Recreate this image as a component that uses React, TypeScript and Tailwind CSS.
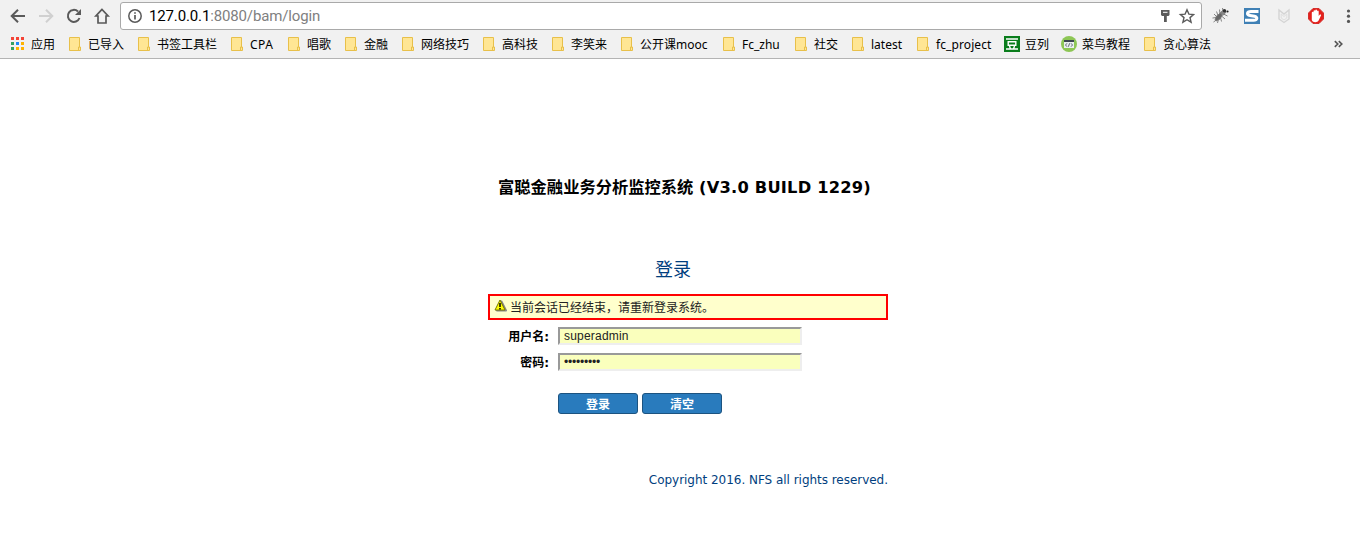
import { ReactNode } from 'react';

const UI = "font-['Noto_Sans','Noto_Sans_CJK_SC',sans-serif]";
const CJK = "font-['Noto_Sans_CJK_SC',sans-serif]";

function Folder() {
  return (
    <svg width="13" height="16" viewBox="0 0 13 16" className="shrink-0">
      <path d="M.5.5h10v9.500h1v3.500h-11z" fill="#ffe694" stroke="#e8c04a" />
      <path d="M9.500 13V10h1.500" fill="none" stroke="#e8c04a" />
    </svg>
  );
}

function AppsIcon() {
  const colors = ['#f44336', '#f44336', '#f44336', '#34a061', '#1e88f5', '#ffb300', '#34a061', '#ffb300', '#ffb300'];
  return (
    <svg width="13" height="16" viewBox="0 0 13 16" className="shrink-0" shapeRendering="crispEdges">
      {colors.map((c, i) => (
        <rect key={i} x={(i % 3) * 5} y={Math.floor(i / 3) * 5} width="3" height="3" fill={c} />
      ))}
    </svg>
  );
}

function DouIcon() {
  return (
    <svg width="16" height="16" viewBox="0 0 16 16" className="-mt-[2px] shrink-0">
      <path d="M0 0h16v16H0z" fill="#0a7d1c" />
      <path d="M2 3h12M2 13h12M4.200 5.800h7.600v3.400H4.200zM5.500 10l1 3M10.500 10l-1 3" fill="none" stroke="#fff" strokeWidth="1.400" />
    </svg>
  );
}

function RunoobIcon() {
  return (
    <svg width="16" height="16" viewBox="0 0 16 16" className="-mt-[2px] shrink-0">
      <circle cx="8" cy="8" r="8" fill="#8dc655" />
      <path d="M3 4h10v8H3z" fill="#e9eef0" />
      <path d="M3 4h10v2H3z" fill="#3c4650" />
      <path d="M6 7.300L4.500 9 6 10.700M10 7.300L11.500 9 10 10.700M8.600 7.300l-1.200 3.400" fill="none" stroke="#3c4650" strokeWidth=".8" />
    </svg>
  );
}

type Mark = { label: string; icon: ReactNode; box: string };

const marks: Mark[] = [
  { label: '应用', icon: <AppsIcon />, box: 'w-[58px] gap-[7px]' },
  { label: '已导入', icon: <Folder />, box: 'w-[69px] gap-[6px]' },
  { label: '书签工具栏', icon: <Folder />, box: 'w-[93px] gap-[6px]' },
  { label: 'CPA', icon: <Folder />, box: 'w-[57px] gap-[6px] tracking-[0.5px]' },
  { label: '唱歌', icon: <Folder />, box: 'w-[57px] gap-[6px]' },
  { label: '金融', icon: <Folder />, box: 'w-[57px] gap-[6px]' },
  { label: '网络技巧', icon: <Folder />, box: 'w-[81px] gap-[6px]' },
  { label: '高科技', icon: <Folder />, box: 'w-[69px] gap-[6px]' },
  { label: '李笑来', icon: <Folder />, box: 'w-[69px] gap-[6px]' },
  { label: '公开课mooc', icon: <Folder />, box: 'w-[102px] gap-[6px]' },
  { label: 'Fc_zhu', icon: <Folder />, box: 'w-[72px] gap-[6px]' },
  { label: '社交', icon: <Folder />, box: 'w-[57px] gap-[6px]' },
  { label: 'latest', icon: <Folder />, box: 'w-[65px] gap-[6px]' },
  { label: 'fc_project', icon: <Folder />, box: 'w-[87px] gap-[6px] tracking-[0.1px]' },
  { label: '豆列', icon: <DouIcon />, box: 'w-[57px] gap-[5px]' },
  { label: '菜鸟教程', icon: <RunoobIcon />, box: 'w-[83px] gap-[5px]' },
  { label: '贪心算法', icon: <Folder />, box: 'w-[80px] gap-[6px]' },
];

function Toolbar() {
  return (
    <div className="flex h-[32px] items-center">
      <svg width="120" height="32" viewBox="0 0 120 32" className="shrink-0" fill="none" stroke="#5a5a5a" strokeWidth="2">
        <path d="M25 16H12.500M18 9.700L11.700 16l6.300 6.300" />
        <path d="M39 16h12.500M46 9.700l6.300 6.300-6.300 6.300" stroke="#d0d0d0" />
        <path d="M79.500 18A6 6 0 1 1 78 11.500" />
        <path d="M81 9v6h-6z" fill="#5a5a5a" stroke="none" />
        <path d="M102 9.400L95.900 16H98v7h8v-7h2.100z" strokeWidth="1.700" />
      </svg>
      <div className="flex h-[28px] w-[1082px] shrink-0 items-center rounded-[3px] border border-[#a9a9a9] bg-white pr-[6px] pl-[6px]">
        <svg width="16" height="16" viewBox="0 0 16 16" fill="none" stroke="#5a5a5a" strokeWidth="1.500">
          <circle cx="8" cy="8" r="6.200" />
          <path d="M8 7v4.500M8 4.300v1.500" strokeWidth="1.700" />
        </svg>
        <div className="ml-[6px] flex-1 font-['Roboto',sans-serif] text-[15px] leading-[26px] tracking-[-0.140px] text-[#808080]">
          <span className="text-black">127.0.0.1</span>:8080/bam/login
        </div>
        <svg width="40" height="20" viewBox="0 0 40 20">
          <path d="M6 4h8.500v5l-1 1h-1.700v6H9v-6H7l-1-1z" fill="#5a5a5a" />
          <path d="M8 6.300h4.500" stroke="#fff" strokeWidth="1" />
          <path d="M32 3.800l1.900 4.300 4.700.4-3.600 3.100 1.100 4.600-4.100-2.500-4.100 2.500 1.100-4.600-3.600-3.100 4.700-.4z" fill="none" stroke="#5a5a5a" strokeWidth="1.400" />
        </svg>
      </div>
      <svg width="158" height="32" viewBox="0 0 158 32" className="shrink-0" fill="none">
        <g stroke="#777" strokeWidth=".9">
          <path d="M14.500 11.500l1.500 4M17.500 9.500l.5 4.500M12 14l3 3M10.500 18l4-.5M11.500 22l3.500-2.500M15.500 23l1-4M19.500 21.500l-1-4M23 19l-3.500-3M25.500 16l-4-2M20.500 8l.5 3" />
          <path d="M13 20l1.500-4 4-3 2 2-2.500 4-4 2z" fill="#666" />
          <path d="M18.500 12.500l3-2.500 2.500 2-2.500 3z" fill="#888" />
          <circle cx="22.500" cy="10.800" r="1.700" fill="#333" stroke="none" />
          <circle cx="25.500" cy="11.500" r="1.100" fill="#222" stroke="none" />
        </g>
        <path d="M42 8h16v16H42z" fill="#3f80b5" />
        <path d="M56.500 11.500H49c-4.500 0-4.500 3.400-1 4l4.500.8c3.500.7 3 4-1 4H43" stroke="#fff" strokeWidth="3" />
        <path d="M77 10v9l5 3.500 5-3.500v-9L82 14z" stroke="#d4d4d4" strokeWidth="1.400" />
        <path d="M79.200 14v4l2.800 2 2.800-2v-4L82 16.500z" stroke="#dedede" strokeWidth="1" />
        <path d="M111 8.500h6l4.500 4.500v6l-4.500 4.500h-6l-4.500-4.500v-6z" fill="#e4201c" stroke="#d5302c" />
        <path d="M109.800 17.500v-5c0-1.100 1.600-1.100 1.700 0V11c.1-1.100 1.700-1.100 1.700 0v-.6c.1-1.100 1.800-1.100 1.800 0v1c.1-1.100 1.700-1.100 1.700 0V16l.9-1.200c.8-.7 1.900-.1 1.400.8L116.600 20.500c-1.200 2.300-6 2.300-6.800-.5z" fill="#fff" />
        <circle cx="146.500" cy="11" r="1.600" fill="#555" />
        <circle cx="146.500" cy="16.200" r="1.600" fill="#555" />
        <circle cx="146.500" cy="21.400" r="1.600" fill="#555" />
      </svg>
    </div>
  );
}

function Bookmarks() {
  return (
    <div className={`${UI} flex h-[26px] items-center pl-[11px] text-[12px] leading-[24px] text-black`}>
      {marks.map((m) => (
        <div key={m.label} className={`flex h-[24px] shrink-0 items-center whitespace-nowrap ${m.box}`}>
          {m.icon}
          <span>{m.label}</span>
        </div>
      ))}
      <svg width="9" height="8" viewBox="0 0 9 8" className="mr-[17px] mb-[2px] ml-auto" fill="none" stroke="#555" strokeWidth="1.600">
        <path d="M.8 1.200L3.800 4 .8 6.800M4.800 1.200L7.800 4 4.800 6.800" />
      </svg>
    </div>
  );
}

function Warning() {
  return (
    <svg width="13" height="14" viewBox="0 0 13 14" className="mt-[3px] shrink-0">
      <path d="M7.500 2.500l4.500 9H3z" fill="#888" stroke="#888" strokeWidth="2" strokeLinejoin="round" />
      <path d="M6 1L11 11H1z" fill="#ff0" stroke="#777700" strokeWidth="1" strokeLinejoin="round" />
      <path d="M6 4v4M6 9v1.500" stroke="#000" strokeWidth="1.500" />
    </svg>
  );
}

const labelText =
  "w-[61px] pt-px text-right font-['DejaVu_Sans','Noto_Sans_CJK_SC',sans-serif] whitespace-nowrap";
const field =
  "ml-[9px] h-[18px] w-[244px] border-2 border-t-[#999] border-l-[#999] border-r-[#eee] border-b-[#eee] bg-[#faffbd] pl-[4px] font-['Liberation_Sans',sans-serif] text-[12px] leading-[14px] font-normal text-[#222] outline-none";
const button =
  'h-[21px] w-[80px] rounded-[3px] border border-[#1c5380] bg-[#297bbd] text-[12px] leading-[20px] font-bold text-white';

export default function App() {
  return (
    <div className="flex h-[545px] w-[1360px] flex-col overflow-hidden bg-white">
      <header className="h-[59px] shrink-0 border-b border-[#b4b4b4] bg-[#f1f1f1]">
        <Toolbar />
        <Bookmarks />
      </header>
      <main className="ml-[488px] flex w-[400px] flex-col">
        <h1 className="mt-[117px] ml-[10px] h-[24px] font-['DejaVu_Sans','Noto_Sans_CJK_SC',sans-serif] text-[16.300px] leading-[24px] font-bold whitespace-nowrap text-black">
          富聪金融业务分析监控系统 <span className="tracking-[0.2px]">(V3.0 BUILD 1229)</span>
        </h1>
        <h2 className={`${CJK} mt-[54px] ml-[167px] h-[28px] text-[18px] leading-[28px] text-[#003e7e]`}>登录</h2>
        <div className={`${CJK} mt-[12px] flex h-[26px] border-2 border-[#f00] bg-[#ffffcc] pl-[4px] text-[12px] leading-[22px] text-[#222]`}>
          <Warning />
          <span className="ml-[3px]">当前会话已经结束，请重新登录系统。</span>
        </div>
        <form className={`${CJK} mt-[7px] flex flex-col gap-[8px] text-[12px] leading-[18px] font-bold text-black`}>
          <label className="flex h-[18px]">
            <span className={labelText}>用户名:</span>
            <input className={`tracking-[0.200px] ${field}`} defaultValue="superadmin" />
          </label>
          <label className="flex h-[18px]">
            <span className={labelText}>密码:</span>
            <input type="password" className={`tracking-[-0.200px] ${field}`} defaultValue="123456789" />
          </label>
          <div className="mt-[14px] ml-[70px] flex gap-[4px]">
            <button type="button" className={button}>登录</button>
            <button type="button" className={button}>清空</button>
          </div>
        </form>
        <footer className="mt-[56px] text-right font-['DejaVu_Sans',sans-serif] text-[12px] leading-[20px] tracking-[-0.030px] whitespace-nowrap text-[#003e7e]">
          Copyright 2016. NFS all rights reserved.
        </footer>
      </main>
    </div>
  );
}
